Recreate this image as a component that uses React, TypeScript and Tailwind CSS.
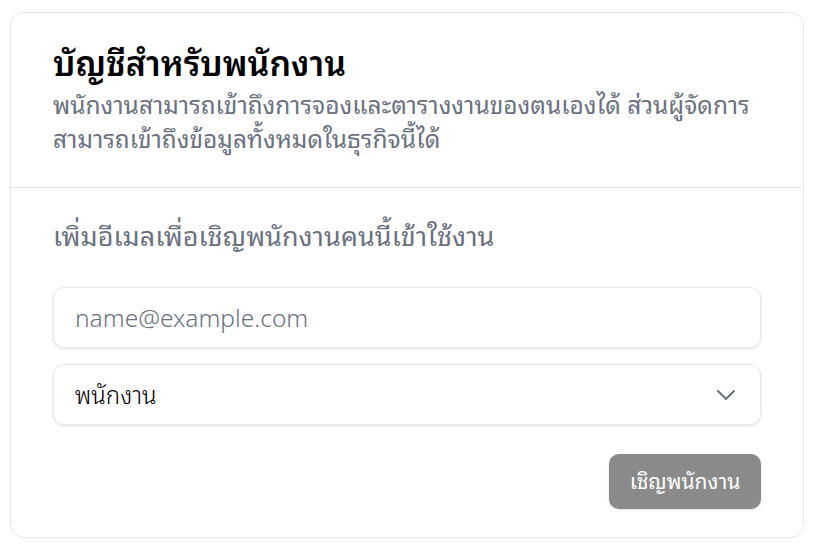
import { ChevronDown } from 'lucide-react';

export default function App() {
  return (
    <div className="min-h-[550px] bg-white px-[10px] pt-[12px] font-['Noto_Sans','Noto_Sans_Thai_Looped',sans-serif]">
      <div className="w-[794px] rounded-[14px] border border-gray-200 bg-white">
        <div className="px-[42px] pt-[30px] pb-[31px] border-b border-gray-200">
          <h1 className="text-[34px] leading-[40px] font-semibold text-black">บัญชีสำหรับพนักงาน</h1>
          <p className="mt-[5px] text-[24.5px] leading-[34px] text-gray-500">
            พนักงานสามารถเข้าถึงการจองและตารางงานของตนเองได้ ส่วนผู้จัดการสามารถเข้าถึงข้อมูลทั้งหมดในธุรกิจนี้ได้
          </p>
        </div>
        <div className="px-[42px] pt-[30px] pb-[28px]">
          <p className="text-[27px] leading-[36px] text-gray-500">เพิ่มอีเมลเพื่อเชิญพนักงานคนนี้เข้าใช้งาน</p>
          <div className="mt-[33px] flex flex-col gap-[16px]">
            <input
              type="email"
              placeholder="name@example.com"
              className="h-[61px] w-full rounded-[11px] border border-gray-200 px-[21px] text-[24.5px] font-light text-black placeholder:text-gray-500 shadow-sm outline-none"
            />
            <div className="flex h-[61px] w-full items-center justify-between rounded-[11px] border border-gray-200 pl-[21px] pr-[18px] shadow-sm">
              <span className="text-[24px] font-light text-black">พนักงาน</span>
              <ChevronDown className="h-[32px] w-[32px] text-gray-500" strokeWidth={1.5} />
            </div>
          </div>
          <div className="mt-[29px] flex justify-end">
            <button className="h-[55px] w-[152px] rounded-[10px] bg-[#8a8a8a] text-[21px] text-white shadow-sm">
              เชิญพนักงาน
            </button>
          </div>
        </div>
      </div>
    </div>
  );
}
